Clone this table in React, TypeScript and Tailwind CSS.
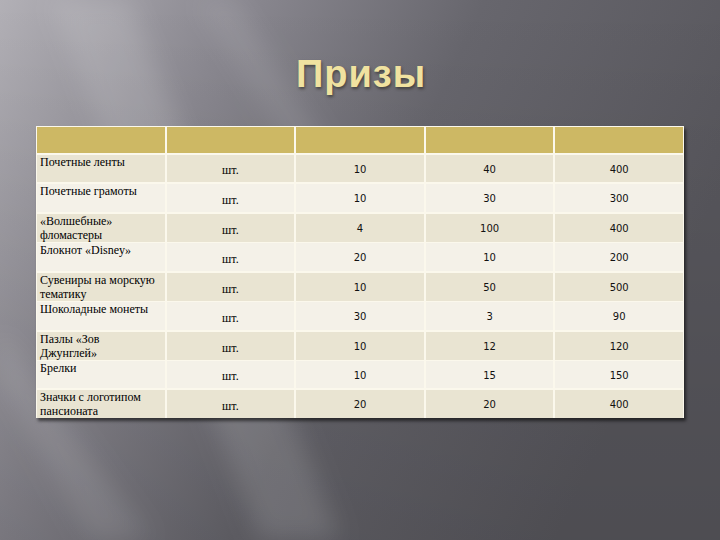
const rows = [
  { name: ["Почетные ленты"], unit: "шт.", a: "10", b: "40", c: "400", h: "h-[27px]" },
  { name: ["Почетные грамоты"], unit: "шт.", a: "10", b: "30", c: "300", h: "h-[28px]" },
  { name: ["«Волшебные»", "фломастеры"], unit: "шт.", a: "4", b: "100", c: "400", h: "h-[27px]" },
  { name: ["Блокнот «Disney»"], unit: "шт.", a: "20", b: "10", c: "200", h: "h-[28px]" },
  { name: ["Сувениры на морскую", "тематику"], unit: "шт.", a: "10", b: "50", c: "500", h: "h-[27px]" },
  { name: ["Шоколадные монеты"], unit: "шт.", a: "30", b: "3", c: "90", h: "h-[28px]" },
  { name: ["Пазлы «Зов", "Джунглей»"], unit: "шт.", a: "10", b: "12", c: "120", h: "h-[27px]" },
  { name: ["Брелки"], unit: "шт.", a: "10", b: "15", c: "150", h: "h-[27px]" },
  { name: ["Значки с логотипом", "пансионата"], unit: "шт.", a: "20", b: "20", c: "400", h: "h-[27px]" },
];

const Backdrop = () => (
  <svg
    className="absolute inset-0 w-full h-full"
    viewBox="0 0 720 540"
    preserveAspectRatio="none"
  >
    <defs>
      <linearGradient id="base" x1="0" y1="0" x2="1" y2="0.35">
        <stop offset="0" stopColor="#b2b0b6" />
        <stop offset="0.3" stopColor="#8a8890" />
        <stop offset="0.6" stopColor="#67666d" />
        <stop offset="1" stopColor="#58575d" />
      </linearGradient>
      <linearGradient id="shade" x1="0" y1="0" x2="0" y2="1">
        <stop offset="0" stopColor="#000" stopOpacity="0" />
        <stop offset="1" stopColor="#000" stopOpacity="0.12" />
      </linearGradient>
      <filter id="blur" x="-20%" y="-20%" width="140%" height="140%">
        <feGaussianBlur stdDeviation="12" />
      </filter>
    </defs>
    <rect width="720" height="540" fill="url(#base)" />
    <rect width="720" height="540" fill="url(#shade)" />
    <g filter="url(#blur)" fill="#ffffff">
      <polygon points="50,0 130,0 340,540 260,540" opacity="0.13" />
      <polygon points="195,0 235,0 330,150 290,150" opacity="0.09" />
      <polygon points="0,380 0,330 150,540 90,540" opacity="0.1" />
    </g>
  </svg>
);

const App = () => {
  return (
    <div className="relative w-[720px] h-[540px] overflow-hidden">
      <Backdrop />
      <div className="relative flex flex-col">
        <h1
          className="h-[126px] pt-[52px] text-center text-[38px] leading-[44px] font-bold tracking-[1px] text-[#f0e2a0] pl-[2px]"
          style={{
            fontFamily: '"Liberation Sans", Arial, sans-serif',
            textShadow: "1px 2px 3px rgba(40,38,30,0.6)",
          }}
        >
          Призы
        </h1>

        <div className="mx-[36px] w-[648px] bg-[#fbf8ec] p-[1px] shadow-[2px_3px_3px_rgba(0,0,0,0.55)]">
          <div className="flex flex-col gap-[2px]">
            <div className="grid grid-cols-5 gap-[2px] h-[26px]">
              <div className="bg-[#cdb864]" />
              <div className="bg-[#cdb864]" />
              <div className="bg-[#cdb864]" />
              <div className="bg-[#cdb864]" />
              <div className="bg-[#cdb864]" />
            </div>
            {rows.map((r, i) => {
              const bg = i % 2 === 0 ? "bg-[#e9e4d2]" : "bg-[#f4f1e8]";
              return (
                <div key={i} className={`grid grid-cols-5 gap-[2px] ${r.h}`}>
                  <div
                    className={`${bg} pl-[3px] text-[12px] leading-[14px] text-black whitespace-nowrap`}
                    style={{ fontFamily: '"Liberation Serif", "Times New Roman", serif' }}
                  >
                    {r.name.map((line, j) => (
                      <div key={j}>{line}</div>
                    ))}
                  </div>
                  <div
                    className={`${bg} flex items-center justify-center pt-[3px] text-[12px] text-black`}
                    style={{ fontFamily: '"Liberation Serif", "Times New Roman", serif' }}
                  >
                    {r.unit}
                  </div>
                  {[r.a, r.b, r.c].map((v, k) => (
                    <div
                      key={k}
                      className={`${bg} flex items-center justify-center pt-[1px] text-[10px] text-[#111]`}
                      style={{ fontFamily: '"DejaVu Sans", Verdana, sans-serif' }}
                    >
                      {v}
                    </div>
                  ))}
                </div>
              );
            })}
          </div>
        </div>
      </div>
    </div>
  );
};

export default App;
